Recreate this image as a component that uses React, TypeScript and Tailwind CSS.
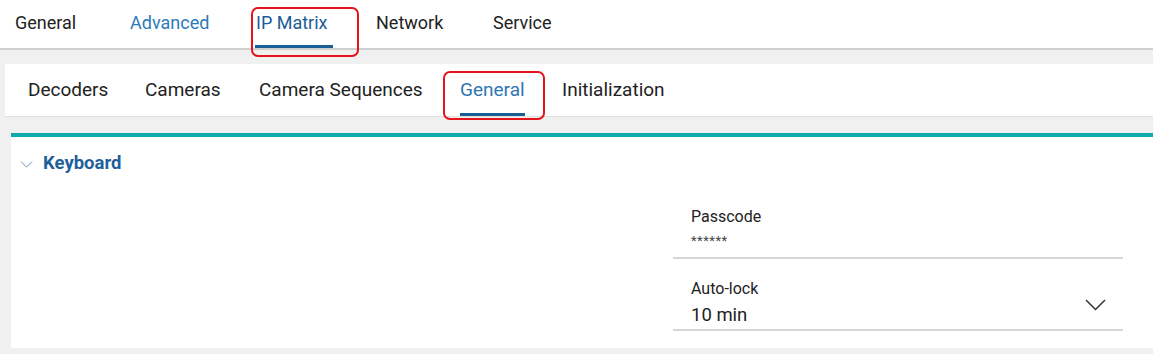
const topTabs = [
  { label: "General", w: "w-[115px]" },
  { label: "Advanced", w: "w-[126px]" },
  { label: "IP Matrix", w: "w-[120px]" },
  { label: "Network", w: "w-[117px]" },
  { label: "Service", w: "w-auto" },
];

const subTabs = [
  { label: "Decoders", w: "w-[117px]" },
  { label: "Cameras", w: "w-[114px]" },
  { label: "Camera Sequences", w: "w-[201px]" },
  { label: "General", w: "w-[102px]" },
  { label: "Initialization", w: "w-auto" },
];

function Chevron({ className }: { className?: string }) {
  return (
    <svg viewBox="0 0 21 12" className={className} fill="none" stroke="currentColor" strokeWidth={1.5}>
      <polyline points="1,1 10.5,10.5 20,1" />
    </svg>
  );
}

export default function App() {
  return (
    <div className="h-[354px] w-[1153px] overflow-hidden bg-[#f0f0f0] font-['Roboto',sans-serif] text-[#222]">
      <div className="flex h-[50px] items-start border-b-2 border-[#cfcfcf] bg-white pl-[15px] pt-[11px] text-[18px] leading-[24px]">
        {topTabs.map((t, i) => (
          <div key={t.label} className={"shrink-0 " + t.w}>
            <span
              className={
                "relative inline-block " +
                (i === 1 ? "text-[#2b7bb9]" : i === 2 ? "text-[#1a5e96]" : "")
              }
            >
              {t.label}
              {i === 2 ? (
                <>
                  <span className="absolute -left-px -right-[5px] top-[34px] h-[3px] bg-[#1a5e96]" />
                  <span className="pointer-events-none absolute -left-[5px] -right-[31px] -top-[4px] -bottom-[22px] rounded-[7px] border-2 border-[#e3141b]" />
                </>
              ) : null}
            </span>
          </div>
        ))}
      </div>

      <div className="ml-[5px] mt-[14px] flex h-[53px] items-start border-b border-[#e0e0e0] bg-white pl-[23px] pt-[13px] text-[19px] leading-[26px]">
        {subTabs.map((t, i) => (
          <div key={t.label} className={"shrink-0 " + t.w}>
            <span className={"relative inline-block " + (i === 3 ? "text-[#2f76b1]" : "")}>
              {t.label}
              {i === 3 ? (
                <>
                  <span className="absolute left-0 right-0 top-[36px] h-[3px] bg-[#1a5e96]" />
                  <span className="pointer-events-none absolute -left-[17px] -right-[20px] -top-[6px] -bottom-[17px] rounded-[7px] border-2 border-[#e3141b]" />
                </>
              ) : null}
            </span>
          </div>
        ))}
      </div>

      <div className="ml-[11px] mt-[16px] h-[215px] border-t-4 border-[#0fa9b0] bg-white">
        <div className="flex h-[50px] items-center gap-[9px] pl-[8px] pt-[3px] text-[18.5px] font-bold text-[#1f5f9a]">
          <Chevron className="mt-[1px] h-[7px] w-[15px] text-[#5a86b0]" />
          <span>Keyboard</span>
        </div>

        <div className="ml-[662px] mt-[20px] w-[450px]">
          <div className="border-b-2 border-[#d6d6d6] pb-[6px] pl-[18px]">
            <div className="text-[16px] leading-[20px]">Passcode</div>
            <div className="mt-[4px] text-[13px] leading-[20px] tracking-[0.5px] text-[#444]">******</div>
          </div>
          <div className="flex items-start justify-between border-b-2 border-[#d6d6d6] pb-[2px] pl-[18px] pr-[17px] pt-[20px]">
            <div>
              <div className="text-[16px] leading-[20px]">Auto-lock</div>
              <div className="mt-[4px] text-[18.5px] leading-[24px]">10 min</div>
            </div>
            <Chevron className="mt-[20px] h-[12px] w-[21px] text-[#333]" />
          </div>
        </div>
      </div>
    </div>
  );
}
